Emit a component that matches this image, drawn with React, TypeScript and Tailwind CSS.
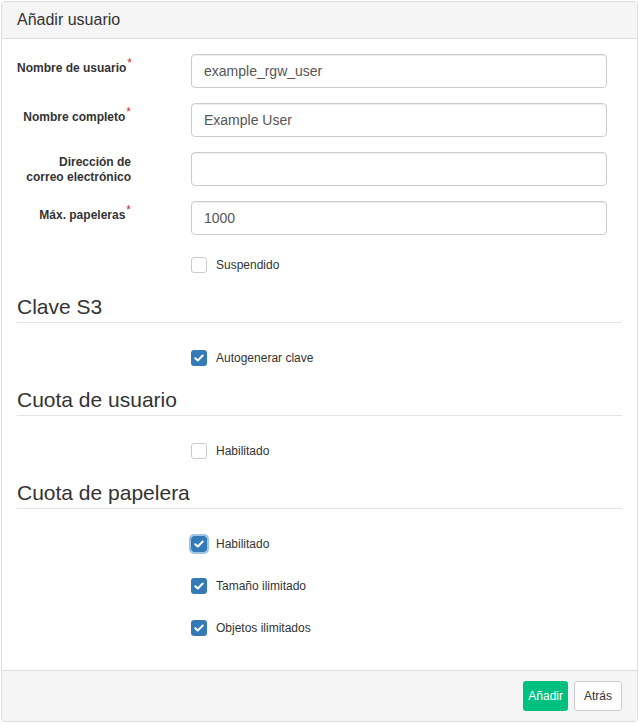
import React from "react";

type Field = { label: string[]; value: string; required?: boolean };

const fields: Field[] = [
  { label: ["Nombre de usuario"], value: "example_rgw_user", required: true },
  { label: ["Nombre completo"], value: "Example User", required: true },
  { label: ["Dirección de", "correo electrónico"], value: "" },
  { label: ["Máx. papeleras"], value: "1000", required: true },
];

function Check({ checked, focus }: { checked?: boolean; focus?: boolean }) {
  if (!checked) {
    return <span className="block h-4 w-4 rounded-[3px] border border-[#ccc] bg-white" />;
  }
  return (
    <span
      className={`flex h-4 w-4 items-center justify-center rounded-[3px] bg-[#337ab7] ${
        focus ? "outline outline-2 outline-[#9ec3e6]" : ""
      }`}
    >
      <svg width="10" height="8" viewBox="0 0 10 8" fill="none" aria-hidden>
        <path d="M1.3 4.2 3.8 6.5 8.7 1.5" stroke="white" strokeWidth="2" strokeLinecap="round" strokeLinejoin="round" />
      </svg>
    </span>
  );
}

function CheckRow({ label, checked, focus }: { label: string; checked?: boolean; focus?: boolean }) {
  return (
    <div className="mb-[15px] flex h-[27px] items-start pl-[174px] pt-[7px]">
      <Check checked={checked} focus={focus} />
      <span className="ml-[9px] text-[12px] leading-[16px] text-[#333]">{label}</span>
    </div>
  );
}

function Legend({ title }: { title: string }) {
  return (
    <div className="mb-5 border-b border-[#e5e5e5] text-[21px] leading-[30px] text-[#333]">{title}</div>
  );
}

export default function App() {
  return (
    <div className="p-px font-['Liberation_Sans',Arial,sans-serif]">
      <div className="w-[637px] overflow-hidden rounded border border-[#ddd] bg-white">
        <div className="border-b border-[#ddd] bg-[#f5f5f5] px-[15px] py-[8px] text-[16px] leading-[20px] text-[#333]">
          Añadir usuario
        </div>

        <div className="px-[15px] pb-[15px] pt-[15px]">
          {fields.map((f) => (
            <div key={f.value + f.label[0]} className="mb-[15px] flex h-[34px] items-start">
              <div
                className={`w-[114px] whitespace-nowrap text-right text-[12px] font-bold leading-[15px] text-[#333] ${
                  f.label.length > 1 ? "pt-[3px]" : "pt-[7px]"
                }`}
              >
                {f.label.map((line, i) => (
                  <div key={i}>
                    {line}
                    {f.required && (
                      <span className="relative -top-[5px] ml-px text-[12px] font-normal leading-none text-[#c9302c]">*</span>
                    )}
                  </div>
                ))}
              </div>
              <input
                readOnly
                value={f.value}
                className="ml-[60px] h-[34px] w-[416px] rounded border border-[#ccc] bg-white px-3 text-[14px] text-[#555] shadow-[inset_0_1px_1px_rgba(0,0,0,0.075)] outline-none"
              />
            </div>
          ))}

          <CheckRow label="Suspendido" />

          <Legend title="Clave S3" />
          <CheckRow label="Autogenerar clave" checked />

          <Legend title="Cuota de usuario" />
          <CheckRow label="Habilitado" />

          <Legend title="Cuota de papelera" />
          <CheckRow label="Habilitado" checked focus />
          <CheckRow label="Tamaño ilimitado" checked />
          <CheckRow label="Objetos ilimitados" checked />
        </div>

        <div className="flex justify-end gap-[6px] border-t border-[#ddd] bg-[#f5f5f5] px-[15px] py-[10px]">
          <button className="h-[30px] rounded-[3px] bg-[#00c07f] px-[5px] text-[12px] text-white">Añadir</button>
          <button className="h-[30px] rounded-[3px] border border-[#ccc] bg-white px-[9px] text-[12px] text-[#333]">
            Atrás
          </button>
        </div>
      </div>
    </div>
  );
}
